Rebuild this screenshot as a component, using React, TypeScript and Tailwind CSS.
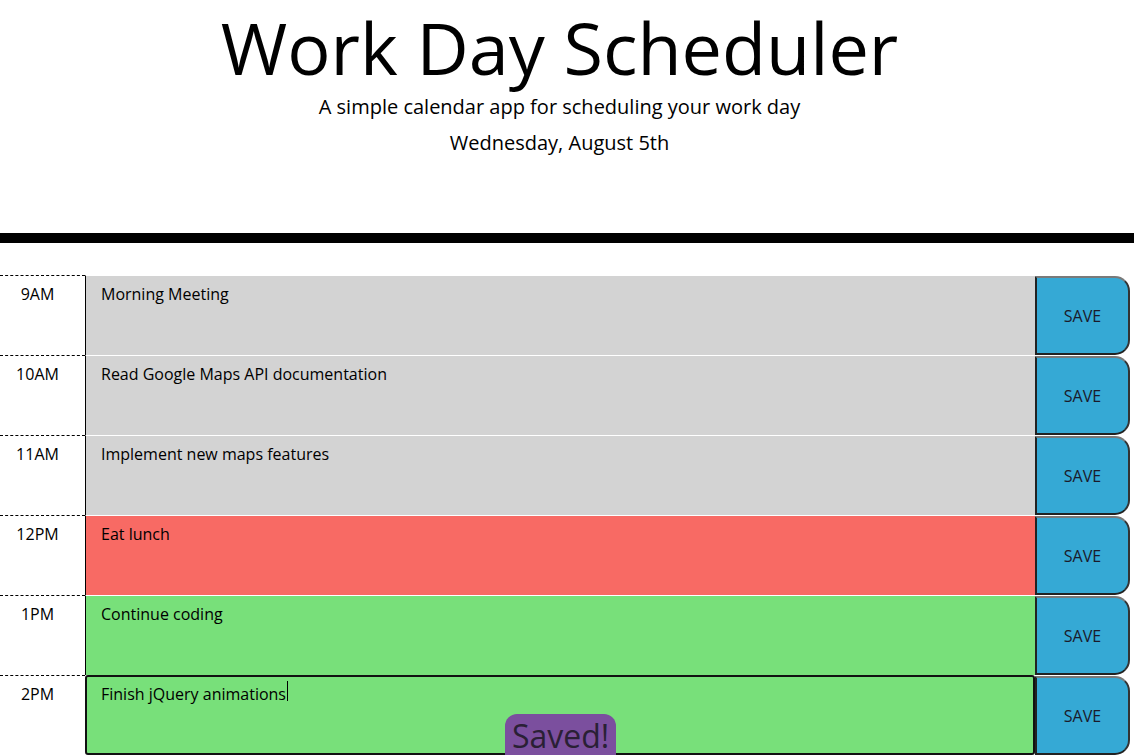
import React from "react";

type Row = { hour: string; text: string; state: "past" | "present" | "future"; focused?: boolean };

const rows: Row[] = [
  { hour: "9AM", text: "Morning Meeting", state: "past" },
  { hour: "10AM", text: "Read Google Maps API documentation", state: "past" },
  { hour: "11AM", text: "Implement new maps features", state: "past" },
  { hour: "12PM", text: "Eat lunch", state: "present" },
  { hour: "1PM", text: "Continue coding", state: "future" },
  { hour: "2PM", text: "Finish jQuery animations", state: "future", focused: true },
];

const bg: Record<Row["state"], string> = {
  past: "bg-[#d3d3d3]",
  present: "bg-[#f86a64]",
  future: "bg-[#78e07a]",
};

export default function App() {
  return (
    <div
      className="relative h-[755px] w-[1134px] overflow-hidden bg-white text-black"
      style={{ fontFamily: '"Open Sans", "Noto Sans", sans-serif' }}
    >
      <header className="border-b-[10px] border-black pb-[75px] pr-[15px] pt-[4px] text-center">
        <h1 className="text-[72px] font-normal leading-[1.2]">Work Day Scheduler</h1>
        <p className="mt-[2px] text-[20px] font-normal leading-[1.5]">
          A simple calendar app for scheduling your work day
        </p>
        <p className="mt-[6px] text-[20px] font-normal leading-[1.5]">Wednesday, August 5th</p>
      </header>

      <div className="mt-[32px]">
        {rows.map((r) => (
          <div key={r.hour} className="flex h-[80px]">
            <div className="w-[85px] shrink-0 border-t border-dashed border-black pr-[10px] pt-[10px] text-center text-[16px] leading-none">
              {r.hour}
            </div>
            <div
              className={
                r.focused
                  ? `w-[950px] shrink-0 rounded-[3px] border-2 border-[#111] px-[14px] pt-[9px] text-[16px] leading-none ${bg[r.state]}`
                  : `w-[950px] shrink-0 border-l border-t border-l-black border-t-white px-[15px] pt-[10px] text-[16px] leading-none ${bg[r.state]}`
              }
            >
              {r.text}
              {r.focused && (
                <span className="relative">
                  <span className="absolute left-[1px] top-[-2px] h-[20px] w-px bg-black" />
                </span>
              )}
            </div>
            <div className="w-[95px] shrink-0 border-t border-white">
              <button className="flex h-[79px] w-full items-center justify-center rounded-r-[15px] border-2 border-b-[#222] border-l-[#222] border-r-[#333] border-t-[#7a7a7a] bg-[#35a9d5] text-[16px] text-[#1a1a2a]">
                SAVE
              </button>
            </div>
          </div>
        ))}
      </div>

      <div className="absolute left-[505px] top-[714px] rounded-t-[12px] bg-[#7b4f9e] px-[7px] pt-[1px] text-[32px] leading-[1.3] text-[#2a2035]">
        Saved!
      </div>
    </div>
  );
}
